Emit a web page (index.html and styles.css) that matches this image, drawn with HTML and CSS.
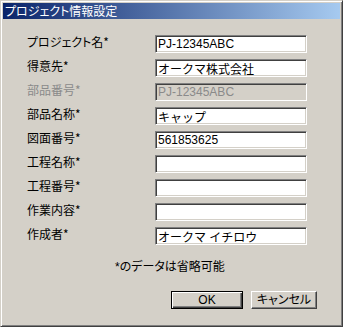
FILE: index.html
```html
<!DOCTYPE html>
<html lang="ja">
<head>
<meta charset="utf-8">
<title>プロジェクト情報設定</title>
<link rel="stylesheet" href="styles.css">
</head>
<body>
<div class="window">
  <div class="titlebar">プロジェクト情報設定</div>
  <div class="form">
    <label class="label">プロジェクト名*</label><input class="field" value="PJ-12345ABC" readonly>
    <label class="label">得意先*</label><input class="field" value="オークマ株式会社" readonly>
    <label class="label disabled">部品番号*</label><input class="field" value="PJ-12345ABC" disabled>
    <label class="label">部品名称*</label><input class="field" value="キャップ" readonly>
    <label class="label">図面番号*</label><input class="field" value="561853625" readonly>
    <label class="label">工程名称*</label><input class="field" value="" readonly>
    <label class="label">工程番号*</label><input class="field" value="" readonly>
    <label class="label">作業内容*</label><input class="field" value="" readonly>
    <label class="label">作成者*</label><input class="field" value="オークマ イチロウ" readonly>
  </div>
  <div class="note">*のデータは省略可能</div>
  <div class="buttons">
    <button class="btn default">OK</button>
    <button class="btn">キャンセル</button>
  </div>
</div>
</body>
</html>
```

FILE: styles.css
```css
html, body {
  margin: 0;
  padding: 0;
  background: #d4d0c8;
}
body {
  font-family: "Liberation Sans", "Noto Sans CJK JP", sans-serif;
  font-size: 12px;
  color: #000;
}
.window {
  width: 343px;
  height: 327px;
  box-sizing: border-box;
  background: #d4d0c8;
  border-top: 1px solid #d4d0c8;
  border-left: 1px solid #d4d0c8;
  border-right: 1px solid #404040;
  border-bottom: 1px solid #404040;
  box-shadow: inset 1px 1px #ffffff, inset -1px -1px #808080;
  padding: 2px;
  display: flex;
  flex-direction: column;
}
.titlebar {
  height: 16px;
  line-height: 16px;
  padding-left: 2px;
  color: #fff;
  font-family: "Noto Sans CJK JP", sans-serif;
  font-feature-settings: "palt";
  font-size: 12px;
  background: linear-gradient(to right, #0a246a, #a6caf0);
}
.form {
  display: grid;
  grid-template-columns: 128px 152px;
  grid-auto-rows: 18px;
  row-gap: 6px;
  padding: 16px 0 0 24px;
}
.label {
  font-family: "Noto Sans CJK JP", sans-serif;
  font-feature-settings: "palt";
  font-size: 12px;
  line-height: 14px;
  align-self: start;
  padding-top: 0px;
}
.label.disabled {
  color: #8a8a8a;
}
.field {
  appearance: none;
  margin: 0;
  width: 152px;
  height: 18px;
  box-sizing: border-box;
  padding: 0 2px;
  background: #fff;
  border-top: 1px solid #808080;
  border-left: 1px solid #808080;
  border-right: 1px solid #ffffff;
  border-bottom: 1px solid #ffffff;
  box-shadow: inset 1px 1px #404040, inset -1px -1px #d4d0c8;
  font-family: "Liberation Sans", "Noto Sans CJK JP", sans-serif;
  font-size: 12px;
  color: #000;
  outline: none;
}
.field:disabled {
  background: #d4d0c8;
  color: #8a8a8a;
  -webkit-text-fill-color: #8a8a8a;
  opacity: 1;
}
.note {
  margin-top: 15px;
  padding-left: 112px;
  line-height: 14px;
  font-family: "Liberation Sans", "Noto Sans CJK JP", sans-serif;
  font-feature-settings: "palt";
}
.buttons {
  display: flex;
  justify-content: flex-end;
  gap: 8px;
  margin-top: 17px;
  padding-right: 23px;
}
.btn {
  appearance: none;
  margin: 0;
  height: 18px;
  box-sizing: border-box;
  padding: 0;
  background: #d4d0c8;
  border-top: 1px solid #ffffff;
  border-left: 1px solid #ffffff;
  border-right: 1px solid #404040;
  border-bottom: 1px solid #404040;
  box-shadow: inset -1px -1px #808080;
  font-family: "Liberation Sans", "Noto Sans CJK JP", sans-serif;
  font-feature-settings: "palt";
  font-size: 12px;
  line-height: 14px;
  color: #000;
  width: 66px;
}
.btn.default {
  width: 72px;
  border: 1px solid #000;
  box-shadow: inset 1px 1px #ffffff, inset -1px -1px #404040, inset -2px -2px #808080;
}
```
